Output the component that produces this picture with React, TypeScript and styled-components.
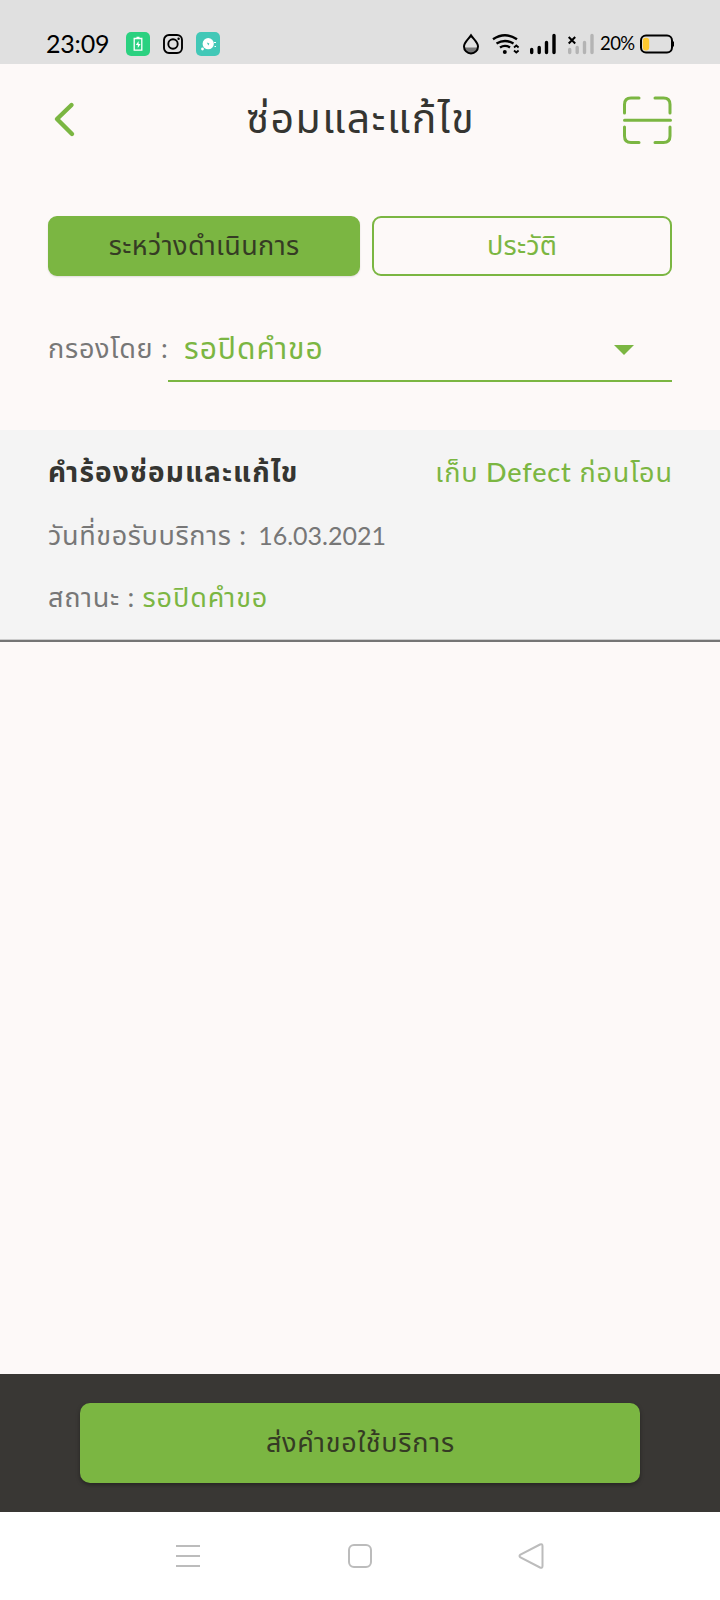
import React from 'react';
import styled, { createGlobalStyle } from 'styled-components';

const green = '#7bb642';
const thai = `'Lato', 'Noto Sans Thai', 'Noto Sans', sans-serif`;

const GlobalStyle = createGlobalStyle`
  *, *::before, *::after { box-sizing: border-box; }
  body { margin: 0; background: #fdf9f8; }
`;

const Screen = styled.div`
  display: flex;
  flex-direction: column;
  width: 720px;
  height: 1600px;
  background: #fdf9f8;
  font-family: ${thai};
`;

const StatusBar = styled.header`
  display: flex;
  justify-content: space-between;
  height: 64px;
  padding: 32px 46px 8px;
  background: #e0e0e0;
  color: #000;
`;

const StatusGroup = styled.div<{ $gap?: number }>`
  display: flex;
  align-items: center;
  gap: ${(p) => p.$gap ?? 0}px;
  height: 24px;
`;

const Clock = styled.span`
  width: 62px;
  margin: 0 6px 2px 0;
  font: 400 25px/23px 'Lato', sans-serif;
  letter-spacing: -0.2px;
  white-space: nowrap;
`;

const BatteryLevel = styled.span`
  width: 36px;
  margin: 0 4px 1px 6px;
  font: 400 18.500px/23px 'Lato', sans-serif;
  letter-spacing: -0.6px;
  white-space: nowrap;
`;

const AppBar = styled.div`
  display: flex;
  align-items: center;
  justify-content: space-between;
  height: 112px;
  padding: 0 48px;
`;

const IconButton = styled.button`
  display: flex;
  padding: 0;
  border: 0;
  background: none;
`;

const Text = styled.span<{ $size: number; $color: string; $spacing?: number; $weight?: number }>`
  margin: 0 ${(p) => -(p.$spacing ?? 0)}px 0 0;
  color: ${(p) => p.$color};
  font-size: ${(p) => p.$size}px;
  font-weight: ${(p) => p.$weight ?? 400};
  letter-spacing: ${(p) => p.$spacing ?? 0}px;
  line-height: 38px;
  white-space: nowrap;
`;

const Title = styled(Text)`
  padding-bottom: 4px;
`;

const RowText = styled(Text)`
  line-height: 40px;
`;

const ServiceDate = styled.span`
  margin-left: 4px;
  font-size: 25px;
  letter-spacing: 0;
`;

const Tabs = styled.div`
  display: grid;
  grid-template-columns: 312px 300px;
  gap: 12px;
  padding: 40px 48px 0;
`;

const Tab = styled.button<{ $active?: boolean }>`
  display: flex;
  align-items: center;
  justify-content: center;
  height: 60px;
  padding: 0 0 2px;
  border: 2px solid ${green};
  border-radius: 9px;
  background: ${(p) => (p.$active ? green : 'transparent')};
  box-shadow: ${(p) => (p.$active ? '0 1px 2px rgba(0, 0, 0, 0.12)' : 'none')};
  font-family: inherit;
`;

const Filter = styled.div`
  display: flex;
  height: 106px;
  margin: 0 48px 48px;
  padding-top: 46px;
`;

const FilterLabel = styled.label`
  display: flex;
  align-items: center;
  width: 120px;
  height: 52px;
`;

const Select = styled.div`
  display: flex;
  flex: 1;
  align-items: center;
  justify-content: space-between;
  height: 60px;
  padding: 0 38px 2px 16px;
  border-bottom: 2px solid ${green};
`;

const SelectValue = styled(Text)`
  padding-bottom: 6px;
`;

const Request = styled.article`
  height: 212px;
  padding: 22px 48px 0;
  border-bottom: 2px solid #757575;
  background: #f4f4f4;
  box-shadow: inset 0 -1px #ccc;
`;

const RequestRow = styled.div`
  display: flex;
  justify-content: space-between;
  height: 63px;
`;

const Footer = styled.footer`
  display: flex;
  align-items: center;
  justify-content: center;
  height: 138px;
  margin-top: auto;
  background: #393734;
`;

const SubmitButton = styled.button`
  width: 560px;
  height: 80px;
  padding: 0 0 2px;
  border: 0;
  border-radius: 10px;
  background: ${green};
  box-shadow: 0 2px 4px rgba(0, 0, 0, 0.35);
  font-family: inherit;
`;

const NavBar = styled.nav`
  display: flex;
  justify-content: space-between;
  align-items: center;
  height: 88px;
  padding: 0 174px;
  background: #fff;
`;

export default function App() {
  return (
    <Screen>
      <GlobalStyle />
      <StatusBar>
        <StatusGroup $gap={12}>
          <Clock>23:09</Clock>
          <svg width="24" height="24" viewBox="0 0 24 24" fill="none">
            <rect width="24" height="24" rx="5" fill="#2bd180" />
            <path d="M8.200 6.500h7.600v11.700H8.200zM10.500 5.500h3" stroke="#fff" strokeWidth="1.300" />
            <path d="M12.600 9l-2.800 4h2v3l2.800-4h-2z" fill="#fff" />
          </svg>
          <svg width="22" height="24" viewBox="0 0 22 24" fill="none" stroke="#000" strokeWidth="1.900">
            <rect x="2" y="3" width="18" height="18" rx="5" />
            <circle cx="11" cy="12" r="4.700" />
            <circle cx="16.600" cy="6.800" r="1.200" fill="#000" stroke="none" />
          </svg>
          <svg width="24" height="24" viewBox="0 0 24 24">
            <rect width="24" height="24" rx="5" fill="#42c8b7" />
            <circle cx="12.200" cy="11.700" r="5.600" fill="#fff" />
            <circle cx="6.500" cy="17" r="1.400" fill="#fff" />
            <path d="M10.800 10.600l2.600 1-1 2z" fill="#42c8b7" />
            <path d="M18 10.500h2M18.500 14.500h1.500" stroke="#fff" />
          </svg>
        </StatusGroup>
        <StatusGroup>
          <svg width="132" height="24" viewBox="462 32 132 24" fill="none" stroke="#000">
            <path d="M464.500 47.500h13c0 3.400-2.800 5.500-6.500 5.500s-6.500-2.100-6.500-5.500z" fill="#777" stroke="none" />
            <path d="M471 35.400c-2 3.200-7 7-7 11a7 7 0 0 0 14 0c0-4-5-7.800-7-11z" strokeWidth="2" />
            <path d="M493 39.200q12-8 24 0M496.500 43.500q8.500-5 17 0M500 47.500q5-3.200 10 0" strokeWidth="2.400" />
            <circle cx="504.800" cy="52" r="2" fill="#000" stroke="none" />
            <path d="M514 47.500l2.300-2 2.300 2M514 50.500l2.300 2 2.300-2" strokeWidth="1.800" />
            <path d="M531.700 49.500V52.500M539.200 47.500V52.500M546.500 42.500V52.500M554 35.500V52.500" strokeWidth="3.400" strokeLinecap="round" />
            <path d="M569.700 49.500V52.500M577.200 47.500V52.500M584.500 42.500V52.500M592 35.500V52.500" stroke="#b4b4b4" strokeWidth="3.400" strokeLinecap="round" />
            <path d="M568.700 37l6.500 6.500M575.200 37l-6.500 6.500" strokeWidth="2" />
          </svg>
          <BatteryLevel>20%</BatteryLevel>
          <svg width="34" height="24" viewBox="0 0 34 24" fill="none">
            <rect x="1" y="3.600" width="31" height="17" rx="5" stroke="#000" strokeWidth="2" />
            <rect x="2.800" y="5.800" width="6.400" height="12.600" rx="3" fill="#fdc82f" />
            <path d="M33 9.500v5" stroke="#000" strokeWidth="2" />
          </svg>
        </StatusGroup>
      </StatusBar>

      <AppBar>
        <IconButton aria-label="กลับ">
          <svg width="49" height="48" viewBox="48 96 49 48" fill="none" stroke={green} strokeWidth="4.400" strokeLinecap="round" strokeLinejoin="round">
            <path d="M71.500 105L57 119l15 15" />
          </svg>
        </IconButton>
        <Title as="h1" $size={41} $spacing={1.5} $weight={450} $color="#353531">ซ่อมและแก้ไข</Title>
        <IconButton aria-label="สแกน">
          <svg width="49" height="48" viewBox="0 0 49 48" fill="none" stroke={green} strokeWidth="3" strokeLinecap="round">
            <path d="M1.500 17V8.500q0-6.500 6.500-6.500H16M32 2h8.500q6.500 0 6.500 6.500v8.500M1.500 31v9q0 6.500 6.500 6.500H16M32 46.500h8.500q6.500 0 6.500-6.500V31M1.500 24.300H47.500" />
          </svg>
        </IconButton>
      </AppBar>

      <Tabs>
        <Tab $active><Text $size={27} $spacing={0.4} $color="#353b24">ระหว่างดำเนินการ</Text></Tab>
        <Tab><Text $size={27} $spacing={0.2} $weight={450} $color={green}>ประวัติ</Text></Tab>
      </Tabs>

      <Filter>
        <FilterLabel><Text $size={27} $spacing={0.75} $color="#777">กรองโดย :</Text></FilterLabel>
        <Select>
          <SelectValue $size={30} $spacing={1} $weight={450} $color={green}>รอปิดคำขอ</SelectValue>
          <svg width="20" height="10" viewBox="0 0 20 10"><path d="M0 0h20L10 10z" fill={green} /></svg>
        </Select>
      </Filter>

      <Request>
        <RequestRow>
          <Text $size={28} $spacing={1.15} $weight={700} $color="#353531">คำร้องซ่อมและแก้ไข</Text>
          <RowText $size={27} $spacing={0.85} $weight={450} $color={green}>เก็บ Defect ก่อนโอน</RowText>
        </RequestRow>
        <RequestRow>
          <RowText $size={27} $spacing={0.65} $color="#777">วันที่ขอรับบริการ : <ServiceDate>16.03.2021</ServiceDate></RowText>
        </RequestRow>
        <RequestRow>
          <Text $size={27} $spacing={0.7} $color="#777">สถานะ : <Text $size={27} $spacing={0.9} $weight={450} $color={green}>รอปิดคำขอ</Text></Text>
        </RequestRow>
      </Request>

      <Footer>
        <SubmitButton><Text $size={27} $spacing={0.75} $color="#353b24">ส่งคำขอใช้บริการ</Text></SubmitButton>
      </Footer>
      <NavBar>
        <svg width="28" height="28" viewBox="0 0 28 28" stroke="#bcbcbc" strokeWidth="2"><path d="M2 4h24M2 14h24M2 24h24" /></svg>
        <svg width="28" height="28" viewBox="0 0 28 28" fill="none" stroke="#bcbcbc" strokeWidth="2"><rect x="3" y="3" width="22" height="22" rx="5" /></svg>
        <svg width="28" height="28" viewBox="0 0 28 28" fill="none" stroke="#bcbcbc" strokeWidth="2"><path d="M22 2.500L2.500 12.500q-2 1.500 0 3L22 25.500q2.500 1 2.500-1.500V4q0-2.500-2.500-1.500z" /></svg>
      </NavBar>
    </Screen>
  );
}
